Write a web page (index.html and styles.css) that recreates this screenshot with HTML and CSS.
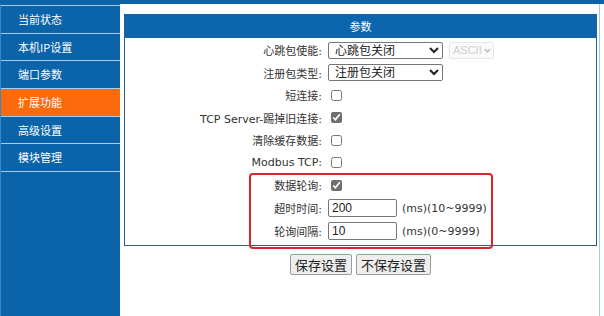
FILE: index.html
```html
<!DOCTYPE html>
<html lang="zh-CN">

<head>
    <meta charset="UTF-8">
    <meta name="viewport" content="width=device-width, initial-scale=1.0">
    <title>扩展功能</title>
    <link rel="stylesheet" href="styles.css">
</head>

<body>
    <div class="topbar"></div>

    <div class="layout">
        <div class="sidebar">
            <ul>
                <li><a href="#">当前状态</a></li>
                <li><a href="#">本机IP设置</a></li>
                <li><a href="#">端口参数</a></li>
                <li class="active"><a href="#">扩展功能</a></li>
                <li><a href="#">高级设置</a></li>
                <li><a href="#">模块管理</a></li>
            </ul>
        </div>

        <div class="main-content">
            <div class="panel">
                <div class="panel-title">参数</div>

                <form class="param-form" onsubmit="return false">
                    <div class="row">
                        <label for="heartbeat">心跳包使能:</label>
                        <div class="ctrl">
                            <select id="heartbeat" class="sel-wide">
                                <option>心跳包关闭</option>
                                <option>心跳包开启</option>
                            </select>
                            <span class="sel-small-wrap">
                                <select class="sel-small" disabled>
                                    <option>ASCII</option>
                                </select>
                                <svg class="chev" width="7" height="5" viewBox="0 0 7 5">
                                    <path d="M0.8 1 L3.5 3.8 L6.2 1" fill="none" stroke="#bdbdbd" stroke-width="1.5"/>
                                </svg>
                            </span>
                        </div>
                    </div>
                    <div class="row">
                        <label for="register">注册包类型:</label>
                        <div class="ctrl">
                            <select id="register" class="sel-wide">
                                <option>注册包关闭</option>
                                <option>MAC地址</option>
                            </select>
                        </div>
                    </div>
                    <div class="row">
                        <label for="shortconn">短连接:</label>
                        <div class="ctrl"><input type="checkbox" id="shortconn"></div>
                    </div>
                    <div class="row">
                        <label for="kickold">TCP Server-踢掉旧连接:</label>
                        <div class="ctrl"><input type="checkbox" id="kickold" checked></div>
                    </div>
                    <div class="row">
                        <label for="clearbuf">清除缓存数据:</label>
                        <div class="ctrl"><input type="checkbox" id="clearbuf"></div>
                    </div>
                    <div class="row">
                        <label for="modbus">Modbus TCP:</label>
                        <div class="ctrl"><input type="checkbox" id="modbus"></div>
                    </div>
                    <div class="row">
                        <label for="polling">数据轮询:</label>
                        <div class="ctrl"><input type="checkbox" id="polling" checked></div>
                    </div>
                    <div class="row row-input">
                        <label for="timeout">超时时间:</label>
                        <div class="ctrl">
                            <input type="text" id="timeout" value="200">
                            <span class="hint">(ms)(10~9999)</span>
                        </div>
                    </div>
                    <div class="row row-input">
                        <label for="interval">轮询间隔:</label>
                        <div class="ctrl">
                            <input type="text" id="interval" value="10">
                            <span class="hint">(ms)(0~9999)</span>
                        </div>
                    </div>
                </form>

                <!-- red annotation box around the polling options -->
                <div class="mark"></div>
            </div>

            <div class="actions">
                <button type="button">保存设置</button>
                <button type="button">不保存设置</button>
            </div>
        </div>
    </div>
</body>

</html>
```

FILE: styles.css
```css
body {
    margin: 0;
    padding: 0;
    width: 604px;
    height: 316px;
    overflow: hidden;
    background-color: #fff;
    font-family: "DejaVu Sans", "Noto Sans CJK SC", sans-serif;
    font-size: 11px;
    color: #333;
}

.topbar {
    height: 4px;
    background-color: #0b63a9;
}

.layout {
    display: flex;
    height: 312px;
}

.sidebar {
    width: 120px;
    background-color: #0b63a9;
    border-left: 1px solid #3f86c4;
    box-sizing: border-box;
    padding-top: 1px;
}

.sidebar ul {
    list-style-type: none;
    margin: 0;
    padding: 0;
    border-top: 1px solid #a9cdee;
}

.sidebar ul li {
    height: 26.67px;
    border-bottom: 1px solid #a9cdee;
}

.sidebar ul li a {
    display: block;
    height: 100%;
    line-height: 26px;
    padding-left: 17px;
    color: #fff;
    text-decoration: none;
    font-family: "Noto Sans CJK SC", sans-serif;
    font-size: 11px;
}

.sidebar ul li.active {
    background-color: #fb6a0c;
}

.main-content {
    width: 480px;
    border-right: 1px solid #a7c9e4;
    box-sizing: border-box;
    padding: 10px 2px 0 4px;
}

.panel {
    position: relative;
    border: 1px solid #30607f;
    border-top-color: #0b66ae;
}

.panel-title {
    height: 23px;
    line-height: 23px;
    background-color: #0b66ae;
    color: #fff;
    text-align: center;
    font-family: "Noto Sans CJK SC", sans-serif;
    font-size: 11px;
}

.param-form {
    padding: 1px 0 2px;
}

.row {
    display: grid;
    grid-template-columns: 197px auto;
    column-gap: 6px;
    align-items: center;
    height: 22.5px;
}

.row-input {
    height: 23px;
}

.row label {
    text-align: right;
    white-space: nowrap;
}

.ctrl {
    display: flex;
    align-items: center;
}

select {
    height: 17px;
    padding: 0 0 0 2px;
    font-family: "Liberation Sans", "Noto Sans CJK SC", sans-serif;
    font-size: 12px;
    color: #222;
    border: 1px solid #767676;
    border-radius: 2px;
    background-color: #fff;
}

.sel-wide {
    width: 115px;
}

.sel-small-wrap {
    position: relative;
    display: inline-block;
    margin-left: 6px;
    height: 17px;
}

.sel-small {
    appearance: none;
    -webkit-appearance: none;
    width: 45px;
    padding-left: 3px;
    font-size: 11px;
    color: #b8b8b8;
    border-color: #dcdcdc;
    background-color: #fafafa;
}

.chev {
    position: absolute;
    right: 3px;
    top: 6px;
}

input[type="checkbox"] {
    width: 11px;
    height: 11px;
    margin: 0 0 0 3px;
    accent-color: #6f6f6f;
}

input[type="text"] {
    width: 69px;
    height: 18px;
    box-sizing: border-box;
    padding: 0 3px;
    font-family: "Liberation Sans", sans-serif;
    font-size: 12px;
    color: #222;
    border: 1px solid #767676;
    border-radius: 2px;
}

.hint {
    margin-left: 5px;
    color: #333;
}

.mark {
    position: absolute;
    left: 124px;
    top: 158px;
    width: 244px;
    height: 76px;
    box-sizing: border-box;
    border: 2px solid #d9262c;
    border-radius: 4px;
}

.actions {
    display: flex;
    justify-content: center;
    gap: 4px;
    margin-top: 8px;
}

.actions button {
    height: 21px;
    padding: 0 4px;
    font-family: "Noto Sans CJK SC", sans-serif;
    font-size: 13px;
    color: #222;
    background-color: #eeeeee;
    border: 1px solid #9c9c9c;
    border-radius: 2px;
    cursor: pointer;
}

.actions button:hover {
    background-color: #e2e2e2;
}
```
